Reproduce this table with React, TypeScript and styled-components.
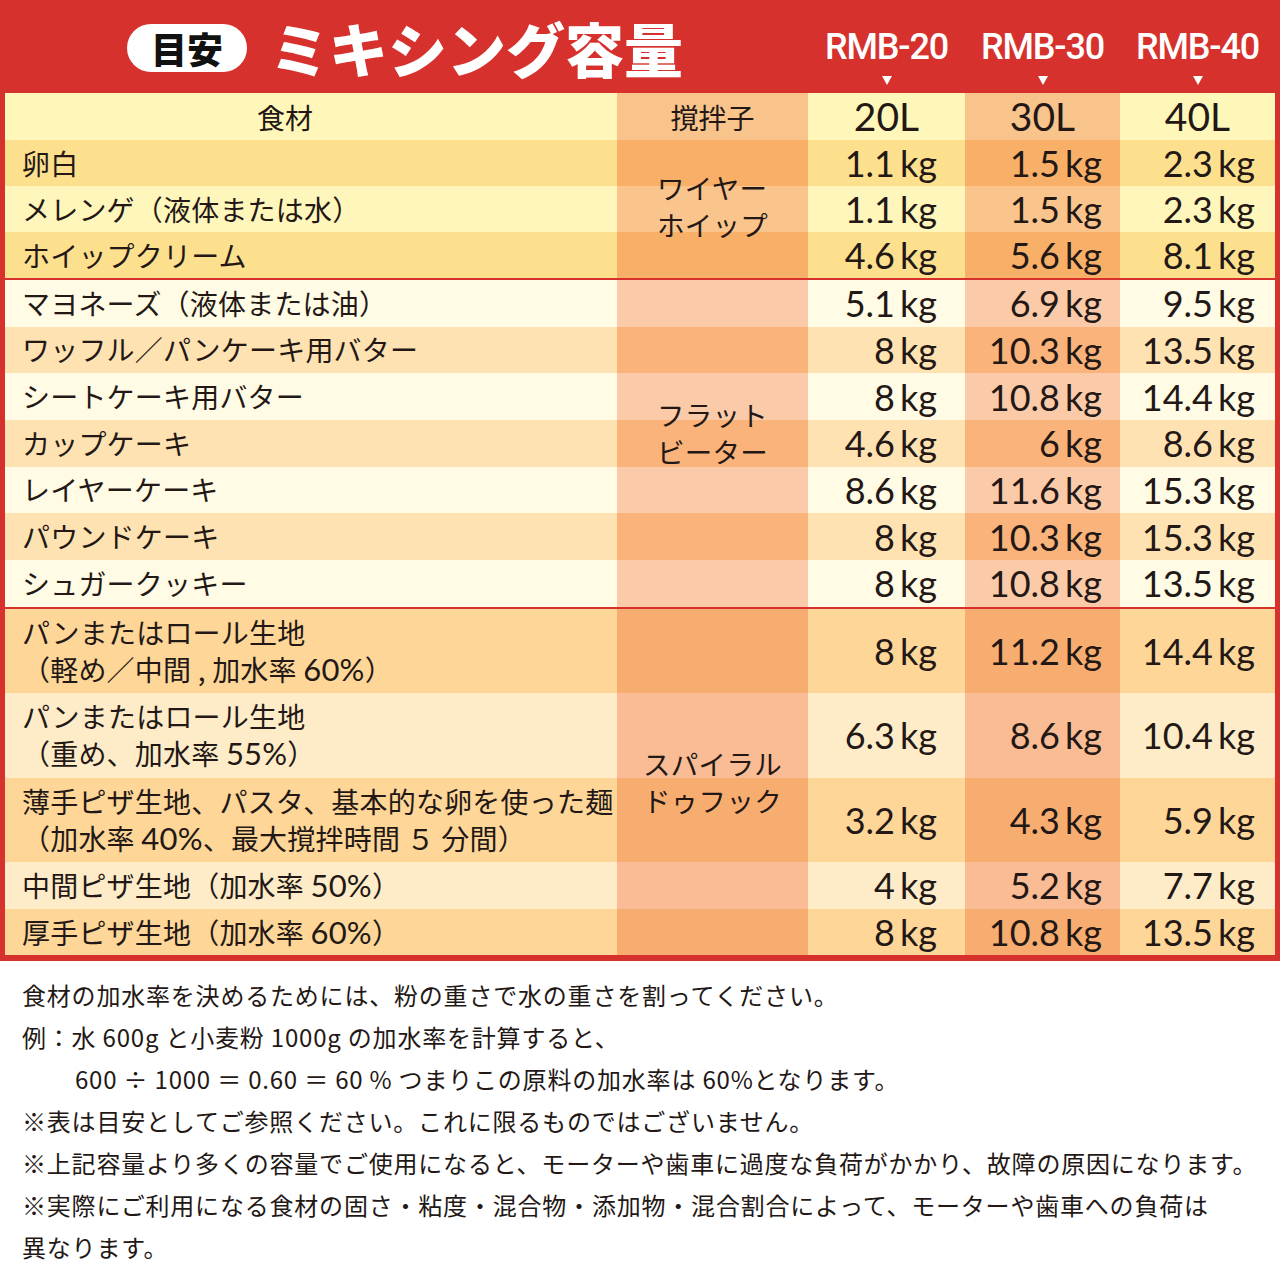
import React from "react";
import styled, { createGlobalStyle } from "styled-components";

const RED = "#d6312d";
const INK = "#231815";
const JP = `"Noto Sans CJK JP", "Noto Sans", sans-serif`;
const NUM = `Lato, "Noto Sans", sans-serif`;
const COLS = "612px 191px 157px 155px 155px";

const GlobalStyle = createGlobalStyle`
  html, body { margin: 0; padding: 0; background: #fff; }
  body { width: 1280px; font-family: ${JP}; color: ${INK}; }
  * { box-sizing: border-box; }
`;

const Page = styled.div`
  width: 1280px;
`;

const Header = styled.header`
  height: 93px;
  background: ${RED};
  display: grid;
  grid-template-columns: 808px 157px 155px 155px 5px;
`;

const TitleArea = styled.div`
  display: flex;
  align-items: center;
  gap: 23px;
  padding-left: 127px;
  padding-top: 2px;
`;

const Badge = styled.span`
  width: 120px;
  height: 48px;
  border-radius: 24px;
  background: #fff;
  color: #111;
  display: flex;
  align-items: center;
  justify-content: center;
  font: 900 36px/1 ${JP};
`;

const Title = styled.h1`
  margin: 0;
  color: #fff;
  font: 900 59px/1 ${JP};
`;

const Model = styled.div`
  display: flex;
  flex-direction: column;
  align-items: center;
  padding-top: 29px;
  gap: 11px;
`;

const ModelName = styled.span`
  color: #fff;
  font: 500 36px/1 Roboto, "Liberation Sans", sans-serif;
  letter-spacing: -1.2px;
`;

const Arrow = styled.span`
  width: 0;
  height: 0;
  border-left: 5px solid transparent;
  border-right: 5px solid transparent;
  border-top: 9px solid #fff;
`;

const Table = styled.div`
  width: 1280px;
  border: 5px solid ${RED};
  border-top: 0;
  border-bottom-width: 6px;
`;

const HeadRow = styled.div`
  display: grid;
  grid-template-columns: ${COLS};
  height: 47px;
`;

const HeadCell = styled.div<{ $bg: string; $num?: boolean; $pr?: number }>`
  background: ${(p) => p.$bg};
  display: flex;
  align-items: center;
  justify-content: center;
  padding-right: ${(p) => p.$pr ?? 0}px;
  font: ${(p) => (p.$num ? `400 39px/1 ${NUM}` : `400 28px/1 ${JP}`)};
  color: ${INK};
`;

const Group = styled.div<{ $rows: string; $sep: boolean }>`
  display: grid;
  grid-template-columns: ${COLS};
  grid-template-rows: ${(p) => p.$rows};
  border-top: ${(p) => (p.$sep ? `2px solid ${RED}` : "0")};
`;

const NameCell = styled.div<{ $row: number; $bg: string }>`
  grid-row: ${(p) => p.$row};
  grid-column: 1;
  background: ${(p) => p.$bg};
  display: flex;
  flex-direction: column;
  justify-content: center;
  padding-left: 17px;
  font: 400 28px/37px ${JP};
  letter-spacing: 0.2px;
  color: ${INK};
  white-space: nowrap;
`;

const StirBg = styled.div<{ $row: number; $bg: string }>`
  grid-row: ${(p) => p.$row};
  grid-column: 2;
  background: ${(p) => p.$bg};
`;

const StirLabel = styled.div<{ $lift: number }>`
  grid-row: 1 / -1;
  grid-column: 2;
  z-index: 1;
  display: flex;
  align-items: center;
  justify-content: center;
  padding-bottom: ${(p) => p.$lift}px;
`;

const StirText = styled.div`
  display: flex;
  flex-direction: column;
  align-items: flex-start;
`;

const StirLine = styled.span`
  display: block;
  height: 37px;
  font: 400 27.5px/37px ${JP};
  letter-spacing: 0.3px;
  color: ${INK};
  white-space: nowrap;
`;

const ValueCell = styled.div<{ $row: number; $col: number; $bg: string; $pr: number }>`
  grid-row: ${(p) => p.$row};
  grid-column: ${(p) => p.$col};
  background: ${(p) => p.$bg};
  display: flex;
  align-items: center;
  justify-content: flex-end;
  padding-right: ${(p) => p.$pr}px;
  font: 400 36px/1 ${NUM};
  color: ${INK};
  white-space: nowrap;
`;

const Unit = styled.span`
  margin-left: 5px;
`;

const Num = styled.span`
  font-family: ${NUM};
  font-size: 31px;
`;

const Notes = styled.div`
  padding: 13px 0 0 22px;
  font: 400 24px/42px ${JP};
  letter-spacing: 0.8px;
  color: ${INK};
`;

const NoteLine = styled.p<{ $indent?: boolean }>`
  margin: 0;
  padding-left: ${(p) => (p.$indent ? "53px" : "0")};
  white-space: nowrap;
`;

type Row = { name: React.ReactNode[]; v: [string, string, string] };
type Tone = { pale: string; deep: string };
type GroupData = {
  label: string[];
  lift: number;
  heights: string[];
  tones: [Tone, Tone];
  rows: Row[];
};

const groups: GroupData[] = [
  {
    label: ["ワイヤー", "ホイップ"],
    lift: 6,
    heights: ["46px", "46px", "46px"],
    tones: [
      { pale: "#fde08e", deep: "#f8b069" },
      { pale: "#fff6bb", deep: "#fac48d" },
    ],
    rows: [
      { name: ["卵白"], v: ["1.1", "1.5", "2.3"] },
      { name: ["メレンゲ（液体または水）"], v: ["1.1", "1.5", "2.3"] },
      { name: ["ホイップクリーム"], v: ["4.6", "5.6", "8.1"] },
    ],
  },
  {
    label: ["フラット", "ビーター"],
    lift: 20,
    heights: Array(7).fill("46.67px"),
    tones: [
      { pale: "#fffbe5", deep: "#fbcaa9" },
      { pale: "#fee2b2", deep: "#f9b37b" },
    ],
    rows: [
      { name: ["マヨネーズ（液体または油）"], v: ["5.1", "6.9", "9.5"] },
      { name: ["ワッフル／パンケーキ用バター"], v: ["8", "10.3", "13.5"] },
      { name: ["シートケーキ用バター"], v: ["8", "10.8", "14.4"] },
      { name: ["カップケーキ"], v: ["4.6", "6", "8.6"] },
      { name: ["レイヤーケーキ"], v: ["8.6", "11.6", "15.3"] },
      { name: ["パウンドケーキ"], v: ["8", "10.3", "15.3"] },
      { name: ["シュガークッキー"], v: ["8", "10.8", "13.5"] },
    ],
  },
  {
    label: ["スパイラル", "ドゥフック"],
    lift: 0,
    heights: ["84.5px", "84.5px", "84.5px", "46.67px", "46.67px"],
    tones: [
      { pale: "#fdd698", deep: "#f8ad70" },
      { pale: "#feecc8", deep: "#f9bc94" },
    ],
    rows: [
      {
        name: [
          "パンまたはロール生地",
          <>
            （軽め／中間 , 加水率 <Num>60%</Num>）
          </>,
        ],
        v: ["8", "11.2", "14.4"],
      },
      {
        name: [
          "パンまたはロール生地",
          <>
            （重め、加水率 <Num>55%</Num>）
          </>,
        ],
        v: ["6.3", "8.6", "10.4"],
      },
      {
        name: [
          "薄手ピザ生地、パスタ、基本的な卵を使った麺",
          <>
            （加水率 <Num>40%</Num>、最大撹拌時間 ５ 分間）
          </>,
        ],
        v: ["3.2", "4.3", "5.9"],
      },
      {
        name: [
          <>
            中間ピザ生地（加水率 <Num>50%</Num>）
          </>,
        ],
        v: ["4", "5.2", "7.7"],
      },
      {
        name: [
          <>
            厚手ピザ生地（加水率 <Num>60%</Num>）
          </>,
        ],
        v: ["8", "10.8", "13.5"],
      },
    ],
  },
];

const VALUE_PAD = [28, 18, 20];
const HEAD_PALE = "#fff7b9";
const HEAD_DEEP = "#f9c48c";

export default function App() {
  return (
    <Page>
      <GlobalStyle />
      <Header>
        <TitleArea>
          <Badge>目安</Badge>
          <Title>ミキシング容量</Title>
        </TitleArea>
        {["RMB-20", "RMB-30", "RMB-40"].map((m) => (
          <Model key={m}>
            <ModelName>{m}</ModelName>
            <Arrow />
          </Model>
        ))}
        <div />
      </Header>
      <Table>
        <HeadRow>
          <HeadCell $bg={HEAD_PALE} $pr={52}>
            食材
          </HeadCell>
          <HeadCell $bg={HEAD_DEEP}>撹拌子</HeadCell>
          <HeadCell $bg={HEAD_PALE} $num $pr={-8}>
            20L
          </HeadCell>
          <HeadCell $bg={HEAD_DEEP} $num>
            30L
          </HeadCell>
          <HeadCell $bg={HEAD_PALE} $num>
            40L
          </HeadCell>
        </HeadRow>
        {groups.map((g, gi) => (
          <Group key={gi} $rows={g.heights.join(" ")} $sep={gi > 0}>
            {g.rows.map((r, ri) => {
              const tone = g.tones[ri % 2];
              const row = ri + 1;
              return (
                <React.Fragment key={ri}>
                  <NameCell $row={row} $bg={tone.pale}>
                    {r.name.map((n, ni) => (
                      <span key={ni}>{n}</span>
                    ))}
                  </NameCell>
                  <StirBg $row={row} $bg={tone.deep} />
                  {r.v.map((val, vi) => (
                    <ValueCell
                      key={vi}
                      $row={row}
                      $col={vi + 3}
                      $bg={vi === 1 ? tone.deep : tone.pale}
                      $pr={VALUE_PAD[vi]}
                    >
                      {val}
                      <Unit>kg</Unit>
                    </ValueCell>
                  ))}
                </React.Fragment>
              );
            })}
            <StirLabel $lift={g.lift}>
              <StirText>
                {g.label.map((l) => (
                  <StirLine key={l}>{l}</StirLine>
                ))}
              </StirText>
            </StirLabel>
          </Group>
        ))}
      </Table>
      <Notes>
        <NoteLine>食材の加水率を決めるためには、粉の重さで水の重さを割ってください。</NoteLine>
        <NoteLine>例：水 600g と小麦粉 1000g の加水率を計算すると、</NoteLine>
        <NoteLine $indent>600 ÷ 1000 ＝ 0.60 ＝ 60 % つまりこの原料の加水率は 60%となります。</NoteLine>
        <NoteLine>※表は目安としてご参照ください。これに限るものではございません。</NoteLine>
        <NoteLine>※上記容量より多くの容量でご使用になると、モーターや歯車に過度な負荷がかかり、故障の原因になります。</NoteLine>
        <NoteLine>
          ※実際にご利用になる食材の固さ・粘度・混合物・添加物・混合割合によって、モーターや歯車への負荷は
          <br />
          異なります。
        </NoteLine>
      </Notes>
    </Page>
  );
}
